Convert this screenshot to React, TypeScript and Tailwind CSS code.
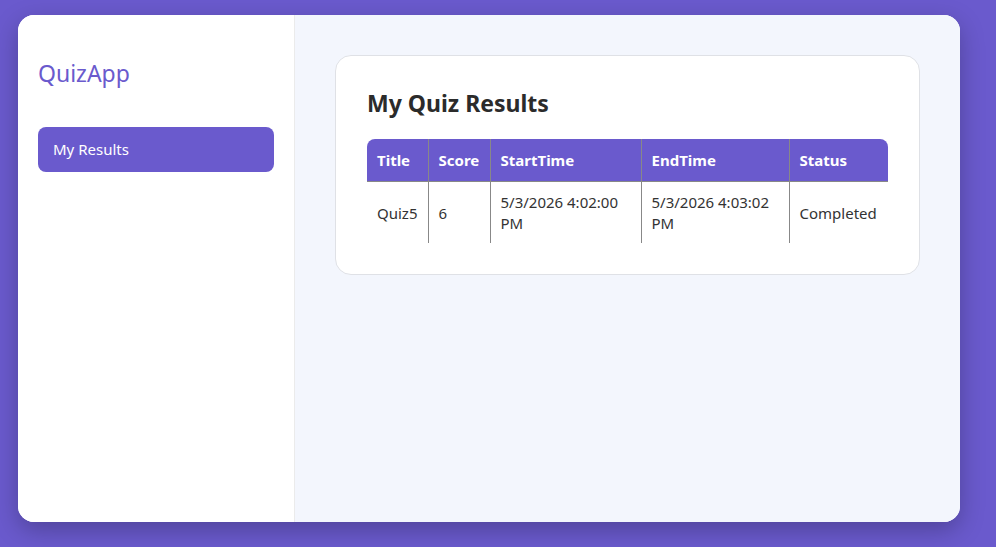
import React from "react";

const rows = [
  { title: "Quiz5", score: "6", start: "5/3/2026 4:02:00 PM", end: "5/3/2026 4:03:02 PM", status: "Completed" },
];

export default function App() {
  return (
    <div
      className="w-[996px] h-[547px] bg-[#6a5acd] overflow-hidden pt-[15px] pl-[18px]"
      style={{ fontFamily: '"Noto Sans", "Open Sans", sans-serif' }}
    >
      <div className="w-[942px] h-[507px] bg-white rounded-[16px] flex overflow-hidden shadow-[0_8px_24px_rgba(0,0,0,0.25)]">
        <aside className="w-[277px] shrink-0 bg-white border-r border-[#ebebeb] px-[20px] pt-[42px]">
          <div className="text-[23px] text-[#6a5acd] leading-[32px]">QuizApp</div>
          <div className="mt-[38px] w-[236px] h-[45px] rounded-[8px] bg-[#6a5acd] text-white text-[15px] flex items-center px-[15px]">
            My Results
          </div>
        </aside>
        <main className="flex-1 bg-[#f3f6fd] p-[40px]">
          <div className="bg-white border border-[#dfe1e6] rounded-[16px] px-[31px] pt-[30px] pb-[31px]">
            <h2 className="text-[23px] font-bold text-[#2b2b2b] leading-[34px]">My Quiz Results</h2>
            <table className="mt-[19px] w-[521px] border-collapse text-[15px] text-[#333]">
              <thead>
                <tr className="bg-[#6a5acd] text-white">
                  <th className="w-[61px] h-[42px] text-left font-bold px-[10px] rounded-tl-[8px] border-b border-[#888]">Title</th>
                  <th className="w-[62px] text-left font-bold px-[10px] border-l border-b border-[#888]">Score</th>
                  <th className="w-[151px] text-left font-bold px-[10px] border-l border-b border-[#888]">StartTime</th>
                  <th className="w-[148px] text-left font-bold px-[10px] border-l border-b border-[#888]">EndTime</th>
                  <th className="text-left font-bold px-[10px] rounded-tr-[8px] border-l border-b border-[#888]">Status</th>
                </tr>
              </thead>
              <tbody>
                {rows.map((r) => (
                  <tr key={r.title}>
                    <td className="h-[62px] px-[10px] pt-[2px] leading-[21px]">{r.title}</td>
                    <td className="px-[10px] pt-[2px] leading-[21px] border-l border-[#888]">{r.score}</td>
                    <td className="px-[10px] pt-[2px] leading-[21px] border-l border-[#888]">{r.start}</td>
                    <td className="px-[10px] pt-[2px] leading-[21px] border-l border-[#888]">{r.end}</td>
                    <td className="px-[10px] pt-[2px] leading-[21px] border-l border-[#888]">{r.status}</td>
                  </tr>
                ))}
              </tbody>
            </table>
          </div>
        </main>
      </div>
    </div>
  );
}
